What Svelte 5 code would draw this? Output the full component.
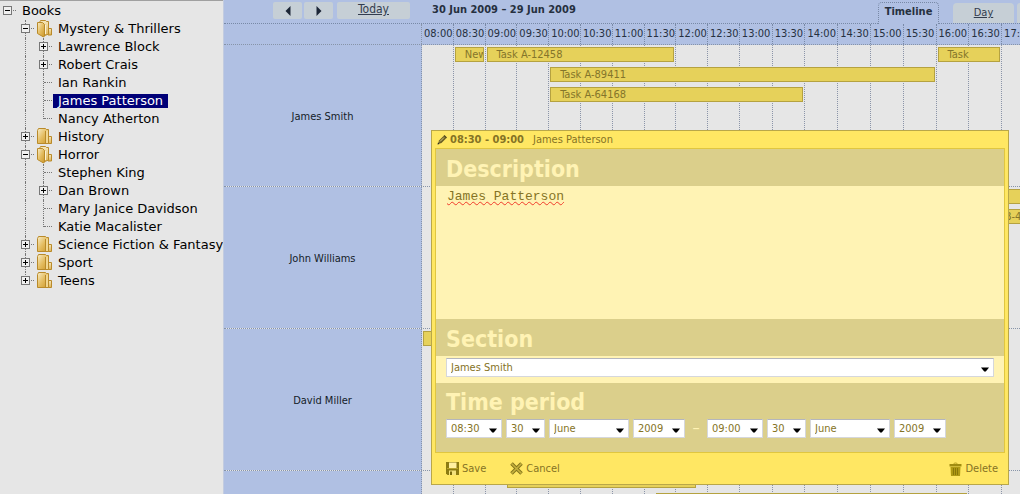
<script>
  const tree = [
    { depth: 0, toggle: 'minus', label: 'Books', last: true },
    { depth: 1, toggle: 'minus', folder: 'open', label: 'Mystery & Thrillers' },
    { depth: 2, toggle: 'plus', label: 'Lawrence Block' },
    { depth: 2, toggle: 'plus', label: 'Robert Crais' },
    { depth: 2, label: 'Ian Rankin' },
    { depth: 2, label: 'James Patterson', selected: true },
    { depth: 2, label: 'Nancy Atherton', last: true },
    { depth: 1, toggle: 'plus', folder: 'closed', label: 'History' },
    { depth: 1, toggle: 'minus', folder: 'open', label: 'Horror' },
    { depth: 2, label: 'Stephen King' },
    { depth: 2, toggle: 'plus', label: 'Dan Brown' },
    { depth: 2, label: 'Mary Janice Davidson' },
    { depth: 2, label: 'Katie Macalister', last: true },
    { depth: 1, toggle: 'plus', folder: 'closed', label: 'Science Fiction & Fantasy' },
    { depth: 1, toggle: 'plus', folder: 'closed', label: 'Sport' },
    { depth: 1, toggle: 'plus', folder: 'closed', label: 'Teens', last: true }
  ];

  const ticks = [
    '08:00', '08:30', '09:00', '09:30', '10:00', '10:30', '11:00', '11:30', '12:00', '12:30',
    '13:00', '13:30', '14:00', '14:30', '15:00', '15:30', '16:00', '16:30', '17:00'
  ];

  // from / to are slot lines, lane is the stacking line inside a section,
  // lead / trail are the gaps to those slot lines
  const sections = [
    {
      name: 'James Smith',
      events: [
        { from: 2, to: 3, lane: 1, text: 'New' },
        { from: 3, to: 9, lane: 1, text: 'Task A-12458' },
        { from: 17, to: 19, lane: 1, text: 'Task' },
        { from: 5, to: 17, lane: 2, text: 'Task A-89411' },
        { from: 5, to: 13, lane: 3, text: 'Task A-64168' }
      ]
    },
    {
      name: 'John Williams',
      events: [
        { from: 17, to: 20, lane: 1, text: '', trail: -4 },
        { from: 18, to: 20, lane: 2, text: 'Task B-48865', trail: -4 }
      ]
    },
    { name: 'David Miller', events: [{ from: 1, to: 3, lane: 1, text: '' }] },
    {
      name: '',
      events: [
        { from: 3, to: 10, lane: 1, text: '', lead: 21, trail: 12 },
        { from: 8, to: 18, lane: 2, text: '', lead: 11, trail: 2 }
      ]
    }
  ];

  const start = [
    { kind: 'time', label: 'Start time', value: '08:30' },
    { kind: 'date', label: 'Start day', value: '30' },
    { kind: 'month', label: 'Start month', value: 'June' },
    { kind: 'year', label: 'Start year', value: '2009' }
  ];
  const end = [
    { kind: 'time', label: 'End time', value: '09:00' },
    { kind: 'date', label: 'End day', value: '30' },
    { kind: 'month', label: 'End month', value: 'June' },
    { kind: 'year', label: 'End year', value: '2009' }
  ];
</script>

{#snippet toggleMark(kind)}
  <svg viewBox="0 0 9 9" width="9" height="9" aria-hidden="true" shape-rendering="crispEdges">
    <rect x="0.5" y="0.5" width="8" height="8" fill="#f0f0f0" stroke="#777" />
    <path d={kind === 'plus' ? 'M2 4.5h5M4.5 2v5' : 'M2 4.5h5'} stroke="#000" />
  </svg>
{/snippet}

{#snippet caret()}
  <svg viewBox="0 0 8 5" width="8" height="5" aria-hidden="true"><path d="M0 0.5h8L4.8 4.5H3.2z" fill="#000" /></svg>
{/snippet}

{#snippet picker(item)}
  <span class="pick {item.kind}">
    <select aria-label={item.label}><option>{item.value}</option></select>
    {@render caret()}
  </span>
{/snippet}

<div class="page">
  <nav class="tree" aria-label="Books">
    <ul>
      {#each tree as node}
        <li>
          {#if node.depth > 0}<span class="cell"></span>{/if}
          {#if node.depth > 1}<span class="cell line"></span>{/if}
          <span class="cell branch" class:line={node.depth > 0} class:end={node.last}>
            {#if node.toggle}
              <button class="toggle" aria-label={node.label}>{@render toggleMark(node.toggle)}</button>
            {/if}
          </span>
          {#if node.folder}
            <svg class="folder" viewBox="0 0 18 18" width="18" height="18" aria-hidden="true">
              <defs>
                <linearGradient id="gold" x1="0" y1="0" x2="1" y2="1">
                  <stop offset="0" stop-color="#f8edc8" />
                  <stop offset="0.5" stop-color="#e4bd62" />
                  <stop offset="1" stop-color="#cc9626" />
                </linearGradient>
                <linearGradient id="pale" x1="0" y1="0" x2="0" y2="1">
                  <stop offset="0" stop-color="#f6e8bd" />
                  <stop offset="1" stop-color="#dfb353" />
                </linearGradient>
              </defs>
              {#if node.folder === 'open'}
                <path d="M12 8.500h3.500v6.500h-3.500z" fill="url(#pale)" stroke="#b98a2a" />
                <path d="M3.500 2.500l1-2h5l1 1h2v12.500l-5 2z" fill="url(#pale)" stroke="#b98a2a" />
                <path d="M1.500 2.500h5l2 2v11.500l-1 1-6-3.500z" fill="url(#gold)" stroke="#b98a2a" />
                <path d="M9.500 5v9" stroke="#fbf3d6" />
              {:else}
                <path d="M12.500 8.500h3v7h-3z" fill="url(#pale)" stroke="#b98a2a" />
                <path d="M1.500 2.500l1-2h7l1 1h2v14h-11z" fill="url(#gold)" stroke="#b98a2a" />
                <path d="M9.500 3v12" stroke="#b98a2a" />
                <path d="M11 2.500v12.500" stroke="#f1d792" stroke-width="2" />
              {/if}
            </svg>
          {/if}
          <a href="#{node.label}" class:selected={node.selected}>{node.label}</a>
        </li>
      {/each}
    </ul>
  </nav>

  <main class="scheduler">
    <header class="bar">
      <button class="nav" aria-label="Previous">
        <svg viewBox="0 0 6 10" width="6" height="10" aria-hidden="true"><path d="M5.500 0v10L0.500 5z" fill="#1c2636" /></svg>
      </button>
      <button class="nav" aria-label="Next">
        <svg viewBox="0 0 6 10" width="6" height="10" aria-hidden="true"><path d="M0.500 0v10L5.500 5z" fill="#1c2636" /></svg>
      </button>
      <button class="today">Today</button>
      <h1>30 Jun 2009 – 29 Jun 2009</h1>
      <div class="tabs">
        <button class="tab active">Timeline</button>
        <button class="tab day">Day</button>
        <span class="tab rest"></span>
      </div>
    </header>

    <div class="row scale">
      <div class="name"></div>
      <div class="slots">
        {#each ticks as tick}<span class="tick">{tick}</span>{/each}
      </div>
    </div>

    {#each sections as section}
      <section class="row">
        <div class="name">{section.name}</div>
        <div class="slots lanes">
          {#each ticks as _, i}<span class="slot" style:grid-column={i + 1}></span>{/each}
          {#each section.events as ev}
            <div
              class="event"
              style:grid-column="{ev.from} / {ev.to}"
              style:grid-row={ev.lane}
              style:margin-left="{ev.lead ?? 1}px"
              style:margin-right="{ev.trail ?? 2}px"
            >{ev.text}</div>
          {/each}
        </div>
      </section>
    {/each}

    <form class="popup" onsubmit={(e) => e.preventDefault()}>
      <div class="caption">
        <svg viewBox="0 0 10 10" width="10" height="10" aria-hidden="true">
          <path d="M1 9l1-3.500L6.500 1 9 3.500 4.500 8z" fill="#6b6026" />
          <path d="M3 6.500L7 2.500" stroke="#d9cb83" />
          <path d="M0.500 9.500l0.500-2 1.500 1.500z" fill="#222" />
          <path d="M6.500 1L7.500 0 10 2.500 9 3.500z" fill="#4b431c" />
        </svg>
        <strong>08:30 - 09:00</strong>
        <span>James Patterson</span>
      </div>

      <div class="fields">
        <h2><label for="description">Description</label></h2>
        <textarea id="description" spellcheck="false" value="James Patterson"></textarea>
        <h2><label for="section">Section</label></h2>
        <div class="single">
          <span class="pick">
            <select id="section"><option>James Smith</option></select>
            {@render caret()}
          </span>
        </div>
        <div class="period">
          <h2>Time period</h2>
          <div class="times">
            {#each start as item}{@render picker(item)}{/each}
            <span class="dash">–</span>
            {#each end as item}{@render picker(item)}{/each}
          </div>
        </div>
      </div>

      <div class="actions">
        <button>
          <svg viewBox="0 0 13 13" width="13" height="13" aria-hidden="true">
            <path d="M0 0h13v13H1.500L0 11.500z" fill="#8c7b12" />
            <path d="M3 0.500h7.500v5.500H3z" fill="#fff0a0" />
            <path d="M1 6.500h11" stroke="#b9a52c" />
            <path d="M3 8.500h7V13H3z" fill="#f3e27c" />
            <path d="M4 9.500h2V13H4z" fill="#7a6a0c" />
          </svg>Save
        </button>
        <button>
          <svg viewBox="0 0 13 13" width="13" height="13" aria-hidden="true">
            <path d="M1.500 1.500l10 10M11.500 1.500l-10 10" stroke="#84751c" stroke-width="3.600" />
            <path d="M1.500 1.500l10 10M11.500 1.500l-10 10" stroke="#c6b23e" stroke-width="1.600" />
          </svg>Cancel
        </button>
        <button class="delete">
          <svg viewBox="0 0 13 14" width="13" height="14" aria-hidden="true">
            <path d="M4.500 2.500c0-2 4-2 4 0" fill="none" stroke="#b39b18" />
            <path d="M0.500 2h12v2.500h-12z" fill="#a08c10" />
            <path d="M1.500 5h10L11 14H2z" fill="#b09a14" />
            <path d="M4.500 6v7M6.500 6v7M8.500 6v7" stroke="#897708" />
          </svg>Delete
        </button>
      </div>
    </form>
  </main>
</div>

<style>
  :global(body) {
    background: #fff;
  }
  .page {
    display: flex;
    height: calc(100vh - 4px);
    margin-right: 9px;
    overflow: hidden;
    font: 11px/14px "DejaVu Sans Condensed", "DejaVu Sans", sans-serif;
    font-stretch: condensed;
    color: #26303f;
    background: #e6e6e6;
  }
  button, select, textarea {
    margin: 0;
    padding: 0;
    border: 0;
    font: inherit;
    color: inherit;
    background: none;
  }
  h1, h2 {
    margin: 0;
  }

  .tree {
    flex: 0 0 223px;
    min-width: 0;
    box-sizing: border-box;
    border-top: 1px solid #a0a0a0;
    font: 13px/14px "DejaVu Sans", sans-serif;
    color: #000;
  }
  .tree ul {
    margin: 0;
    padding: 1px 0 0;
    list-style: none;
  }
  .tree li {
    display: flex;
    align-items: center;
    height: 18px;
    white-space: nowrap;
  }
  .cell {
    position: relative;
    flex: 0 0 18px;
    height: 18px;
  }
  .line::before {
    content: "";
    position: absolute;
    left: 7px;
    top: 0;
    height: 18px;
    border-left: 1px dotted #777;
  }
  .line.end::before {
    height: 9px;
  }
  .branch::after {
    content: "";
    position: absolute;
    left: 8px;
    top: 8px;
    width: 8px;
    border-top: 1px dotted #777;
  }
  .toggle {
    position: absolute;
    z-index: 1;
    left: 3px;
    top: 4px;
    display: block;
    line-height: 0;
  }
  .folder {
    flex: none;
  }
  .tree a {
    padding: 0 5px;
    margin-left: -1px;
    color: inherit;
    text-decoration: none;
  }
  .tree a.selected {
    color: #fff;
    background: #000077;
  }

  .scheduler {
    position: relative;
    flex: 1;
    min-width: 0;
    overflow: hidden;
    border-left: 1px solid #c3cce0;
  }
  .bar {
    display: flex;
    align-items: flex-start;
    box-sizing: border-box;
    height: 24px;
    padding-left: 49px;
    border-bottom: 1px dotted #7889a6;
    background: #b0c0e3;
  }
  .nav, .today {
    height: 17px;
    margin: 2px 2px 0 0;
    border-radius: 2px;
    background: #c6cfd6;
  }
  .nav {
    display: grid;
    place-items: center;
    width: 29px;
  }
  .today {
    width: 73px;
    margin-left: 2px;
    padding-bottom: 3px;
    font-size: 12px;
    line-height: 14px;
    text-decoration: underline;
    color: #333d4e;
  }
  h1 {
    margin: 3px 0 0 20px;
    font-size: 11px;
    line-height: 14px;
    white-space: nowrap;
  }
  .tabs {
    display: flex;
    align-items: flex-start;
    margin-left: auto;
  }
  .tab {
    height: 20px;
    margin-top: 3px;
    border-radius: 4px 4px 0 0;
    background: #c6cfd6;
    color: #333d4e;
  }
  .active {
    box-sizing: border-box;
    width: 61px;
    height: 22px;
    margin: 2px 14px 0 0;
    padding-bottom: 3px;
    border: 1px dotted #7889a6;
    border-bottom: 0;
    font-weight: bold;
    background: #b0c0e3;
    color: #26303f;
  }
  .day {
    width: 61px;
    margin-right: 3px;
    text-decoration: underline;
  }
  .rest {
    width: 3px;
    border-radius: 4px 0 0 0;
  }

  .row {
    display: flex;
    box-sizing: border-box;
    min-height: 142px;
    border-bottom: 1px dotted #8794a8;
  }
  .scale {
    min-height: 21px;
    background: #b0c0e3;
  }
  .name {
    display: grid;
    place-items: center;
    flex: 0 0 198px;
    box-sizing: border-box;
    padding-top: 2px;
    border-right: 1px dotted #8794a8;
    color: #141c28;
    background: #b0c0e3;
  }
  .slots {
    flex: 1;
    min-width: 0;
    display: grid;
    grid-template-columns:
      repeat(10, minmax(0, 32fr))
      repeat(8, minmax(0, 33fr))
      minmax(0, 18fr);
  }
  .tick {
    padding-left: 2px;
    border-right: 1px dotted #7889a6;
    line-height: 20px;
    overflow: hidden;
  }
  .tick:last-child, .slot:nth-child(19) {
    border-right: 0;
  }
  .lanes {
    grid-template-rows: repeat(7, 20px) 1fr;
  }
  .slot {
    grid-row: 1 / -1;
    border-right: 1px dotted #8b94a8;
  }
  .event {
    box-sizing: border-box;
    height: 15px;
    margin-top: 2px;
    padding-left: 9px;
    border: 1px solid #b5a240;
    line-height: 14px;
    white-space: nowrap;
    overflow: hidden;
    color: #84752a;
    background: #e6d15a;
  }

  .popup {
    position: absolute;
    z-index: 2;
    top: 130px;
    left: 207px;
    right: 11px;
    box-sizing: border-box;
    padding: 0 3px;
    border: 1px solid #b9a749;
    color: #857325;
    background: #ffe763;
  }
  .caption {
    display: flex;
    align-items: center;
    height: 17px;
    padding-left: 2px;
    line-height: 17px;
    white-space: nowrap;
  }
  .caption strong {
    margin: 0 9px 0 3px;
  }
  .fields {
    border: 1px solid #e0c640;
    background: #fff3b4;
  }
  h2 {
    padding: 4px 10px 0;
    font-size: 23px;
    line-height: 33px;
    color: #fff3b4;
    background: #dbcf8b;
  }
  textarea {
    display: block;
    box-sizing: border-box;
    width: 100%;
    height: 133px;
    padding: 3px 11px;
    resize: none;
    outline: 0;
    font: 13px/16px "Liberation Mono", monospace;
    text-decoration: underline wavy #f03a2a 1px;
  }
  .single {
    padding: 2px 10px 6px;
  }
  .period {
    padding-bottom: 14px;
    background: #dbcf8b;
  }
  .period h2 {
    padding-top: 3px;
  }
  .times {
    display: flex;
    gap: 4px;
    padding: 0 10px;
  }
  .dash {
    width: 14px;
    text-align: center;
    font-size: 16px;
    line-height: 17px;
    color: #fff3b4;
  }
  .pick {
    display: grid;
    align-items: center;
  }
  .pick select, .pick :global(svg) {
    grid-area: 1 / 1;
  }
  .pick :global(svg) {
    justify-self: end;
    margin: 4px 5px 0 0;
    pointer-events: none;
  }
  .pick select {
    appearance: none;
    box-sizing: border-box;
    width: 100%;
    height: 19px;
    padding-left: 4px;
    border: 1px solid #d5d7dc;
    border-top-color: #b4b6bd;
    background: #fff;
  }
  .time { width: 56px; }
  .date { width: 39px; }
  .month { width: 80px; }
  .year { width: 52px; }

  .actions {
    display: flex;
    align-items: center;
    gap: 24px;
    height: 31px;
    padding: 0 7px 0 11px;
  }
  .actions button {
    display: flex;
    align-items: center;
    gap: 3px;
  }
  .actions .delete {
    margin-left: auto;
  }
</style>
